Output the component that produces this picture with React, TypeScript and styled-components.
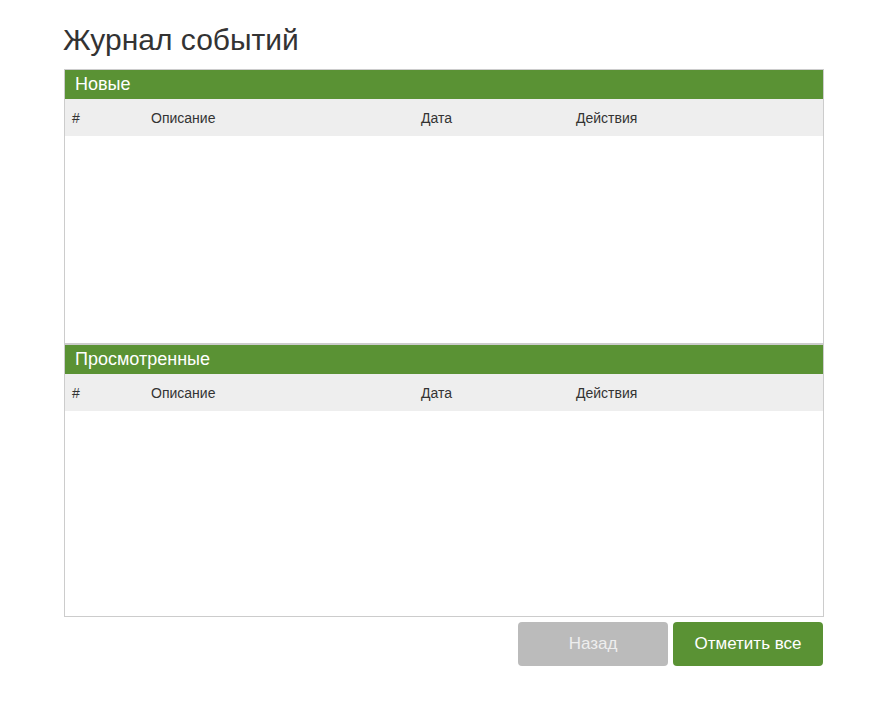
import styled, { createGlobalStyle } from 'styled-components';

const GlobalStyle = createGlobalStyle`
  body {
    margin: 0;
    background: #fff;
    font-family: "Liberation Sans", Arial, sans-serif;
    color: #333;
  }
`;

const Page = styled.div`
  width: 760px;
  margin-left: 64px;
  padding-top: 24px;
`;

const Title = styled.h1`
  margin: 0 0 13px -1px;
  font-size: 30px;
  font-weight: 400;
  line-height: 32px;
  color: #333;
`;

const Panel = styled.section<{ $bodyHeight: number }>`
  border: 1px solid #ccc;
  --body-h: ${(p) => p.$bodyHeight}px;
`;

const PanelHeader = styled.div`
  background: #5a9234;
  color: #fff;
  font-size: 18px;
  height: 29px;
  line-height: 29px;
  padding: 0 10px;
`;

const Table = styled.table`
  width: 100%;
  border-collapse: collapse;
  table-layout: fixed;
`;

const HeadCell = styled.th<{ $width?: number }>`
  background: #eee;
  height: 37px;
  padding: 0 7px;
  text-align: left;
  font-size: 14px;
  font-weight: 400;
  color: #333;
  width: ${(p) => (p.$width ? `${p.$width}px` : 'auto')};
`;

const EmptyBody = styled.div`
  height: var(--body-h);
`;

const Actions = styled.div`
  display: flex;
  justify-content: flex-end;
  gap: 5px;
  margin-top: 5px;
  padding-right: 1px;
`;

const Button = styled.button<{ $variant: 'muted' | 'primary' }>`
  width: 150px;
  height: 44px;
  border: none;
  border-radius: 4px;
  font-family: inherit;
  font-size: 17px;
  cursor: pointer;
  background: ${(p) => (p.$variant === 'primary' ? '#5a9234' : '#bbb')};
  color: ${(p) => (p.$variant === 'primary' ? '#fff' : '#eee')};
`;

const columns = [
  { label: '#', width: 65 },
  { label: 'Описание', width: 256 },
  { label: 'Дата', width: 141 },
  { label: 'Действия' },
];

function EventPanel({ title, bodyHeight }: { title: string; bodyHeight: number }) {
  return (
    <Panel $bodyHeight={bodyHeight}>
      <PanelHeader>{title}</PanelHeader>
      <Table>
        <thead>
          <tr>
            {columns.map((c) => (
              <HeadCell key={c.label} $width={c.width}>
                {c.label}
              </HeadCell>
            ))}
          </tr>
        </thead>
      </Table>
      <EmptyBody />
    </Panel>
  );
}

export default function App() {
  return (
    <>
      <GlobalStyle />
      <Page>
        <Title>Журнал событий</Title>
        <EventPanel title="Новые" bodyHeight={207} />
        <EventPanel title="Просмотренные" bodyHeight={205} />
        <Actions>
          <Button $variant="muted">Назад</Button>
          <Button $variant="primary">Отметить все</Button>
        </Actions>
      </Page>
    </>
  );
}
